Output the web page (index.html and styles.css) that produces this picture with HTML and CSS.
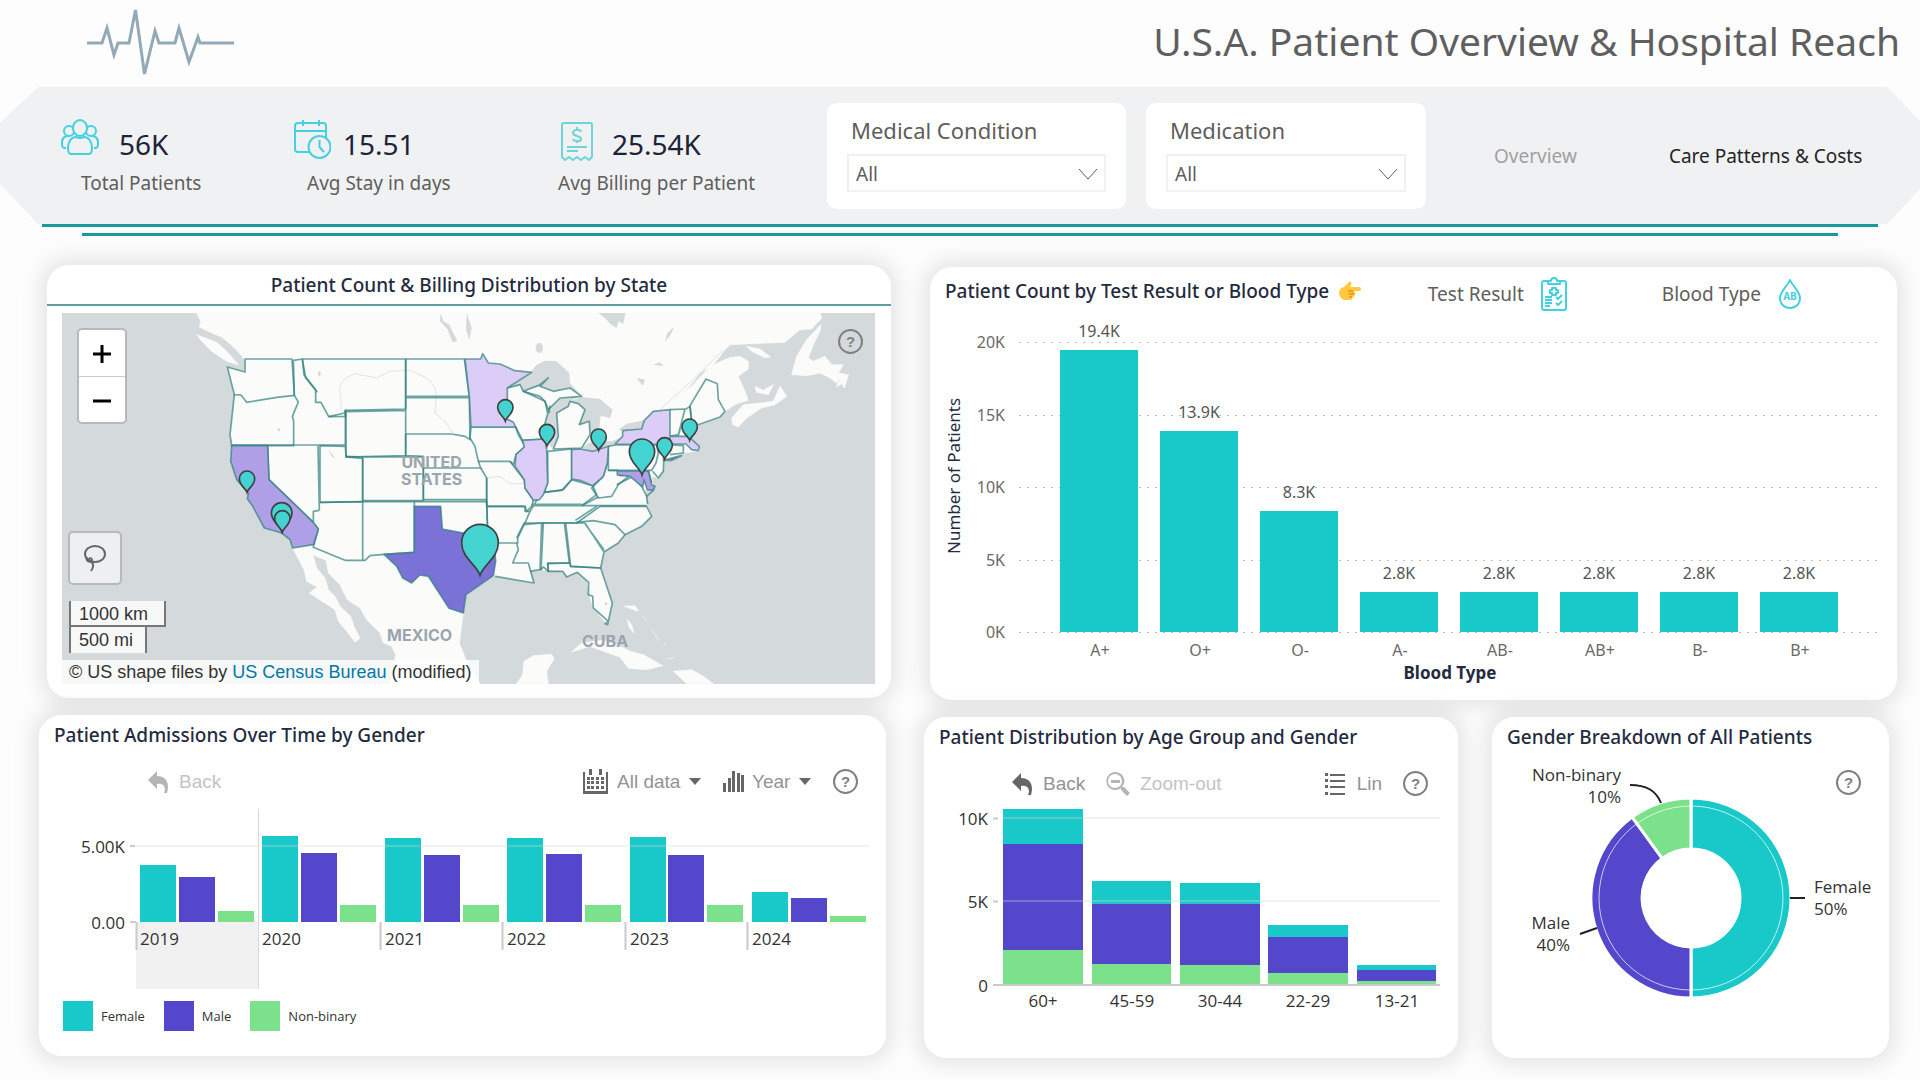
FILE: index.html
```html
<!DOCTYPE html>
<html lang="en">
<head>
  <meta charset="UTF-8" />
  <meta name="viewport" content="width=device-width, initial-scale=1.0" />
  <title>U.S.A. Patient Overview &amp; Hospital Reach</title>
  <link rel="stylesheet" href="styles.css">
</head>
<body>
  <header class="top">
    <svg class="pulse" viewBox="0 0 150 70" width="150" height="70" aria-hidden="true">
      <path d="M1 37H16L21 22L28 49L32 37H43L49.500 4L58.500 68L69 25L73 37H89L93 22L103 56L112 31L114 37H148"/>
    </svg>
    <h1>U.S.A. Patient Overview &amp; Hospital Reach</h1>
  </header>

  <section class="band">
    <div class="kpis">
      <div class="kpi">
        <div class="kpi-row">
          <svg class="icon" viewBox="0 0 46 40" width="46" height="40">
            <circle cx="8" cy="12" r="5"/><circle cx="30" cy="12" r="5"/>
            <path d="M5 29H4C1 29 1 27 1 24C1 20 3 17 7 17M33 29H34C37 29 37 27 37 24C37 20 35 17 31 17"/>
            <ellipse class="fill-bg" cx="19" cy="9" rx="7" ry="8"/>
            <path class="fill-bg" d="M10 35C7 35 7 32 7 29C7 22 11 18 15 18Q19 20 23 18C27 18 31 22 31 29C31 32 31 35 28 35Z"/>
          </svg>
          <span class="kpi-value">56K</span>
        </div>
        <div class="kpi-label indent-lg">Total Patients</div>
      </div>
      <div class="kpi">
        <div class="kpi-row">
          <svg class="icon" viewBox="0 0 37 40" width="37" height="40">
            <rect x="1" y="4" width="31" height="29" rx="3"/>
            <path d="M1 12H32M9 1V7M25 1V7"/>
            <circle class="fill-bg" cx="25.500" cy="28" r="11"/>
            <path d="M25.500 21V28L30 33"/>
          </svg>
          <span class="kpi-value">15.51</span>
        </div>
        <div class="kpi-label indent">Avg Stay in days</div>
      </div>
      <div class="kpi">
        <div class="kpi-row">
          <svg class="icon soft" viewBox="-3 -4 42 44" width="42" height="44">
            <path d="M1 36V4Q1 2 3 2H29Q31 2 31 4V36L28 39L24 36L20 39L16 36L12 39L8 36L4 39Z"/>
            <path d="M20 11C19 8 12 8 12 12C12 16 20 14 20 18C20 21 13 21 12 18M16 6V9M16 19V22M6 26H26M6 30H17"/>
          </svg>
          <span class="kpi-value">25.54K</span>
        </div>
        <div class="kpi-label">Avg Billing per Patient</div>
      </div>
    </div>

    <div class="slicer slicer-wide">
      <label for="condition">Medical Condition</label>
      <div class="select-box">
        <select id="condition"><option>All</option></select>
        <svg viewBox="0 0 20 12" width="20" height="12"><path d="M1 1L10 11L19 1"/></svg>
      </div>
    </div>
    <div class="slicer">
      <label for="medication">Medication</label>
      <div class="select-box">
        <select id="medication"><option>All</option></select>
        <svg viewBox="0 0 20 12" width="20" height="12"><path d="M1 1L10 11L19 1"/></svg>
      </div>
    </div>

    <nav class="pages">
      <a href="#" class="current">Overview</a>
      <a href="#">Care Patterns &amp; Costs</a>
    </nav>
  </section>
  <div class="rule"></div>
  <div class="rule rule-short"></div>

  <main>
    <div class="row row-top">
      <!-- map -->
      <section class="card card-map">
        <h2>Patient Count &amp; Billing Distribution by State</h2>
        <div class="map">
          <svg class="map-svg" viewBox="96 190 2439 1112" role="img" aria-label="Map of the United States">
            <g class="land">
              <path d="M500 190L512 215L508 232L545 250L575 262L610 292L630 312L643 330L645 367L592 352L613 435L600 555L605 588L602 635L620 690L650 725L655 750L668 770L703 835L755 850L780 870L788 895L822 960L830 995L862 1012L838 1030L880 1058L915 1080L925 1115L950 1145L975 1178L990 1165L972 1130L962 1100L930 1070L915 1040L895 1020L885 985L860 955L848 915L888 932L895 970L930 1005L952 1050L990 1075L1010 1110L1050 1150L1060 1180L1085 1190L1097 1215L1080 1302H1350L1310 1235L1288 1180L1300 1090L1308 1035L1390 980L1512 1000L1500 965L1555 960L1600 965L1612 982L1642 968L1672 998L1678 1035L1690 1075L1733 1125L1747 1060L1712 955L1722 907L1765 880L1785 855L1835 830L1865 800L1850 765L1845 720L1870 722L1865 680L1885 685L1902 655L1900 630L1960 610L2008 603L1982 570L1985 535L2070 502L2085 485L2120 462L2155 452L2145 425L2125 380L2155 358L2155 335L2130 320L2095 325L2040 350L1985 410L1890 480L1975 415L2010 370L2050 345L2085 300L2100 285L2265 278L2310 240L2345 238L2375 205L2370 190Z"/>
              <path d="M500 255L560 278L590 305L625 345L590 335L545 305L515 275Z"/>
              <path d="M2372 225L2330 270L2300 320L2285 375L2330 378L2370 370L2400 385L2420 400L2432 375L2420 412L2435 402L2443 415L2456 375L2425 370L2440 345L2405 345L2385 320L2350 335L2335 325L2350 285L2372 240Z"/>
              <path d="M2150 290L2190 298L2222 322L2205 325L2165 305ZM2175 410L2200 422L2230 405L2215 435L2180 428ZM2105 505L2140 465L2190 460L2230 455L2250 410L2270 440L2235 465L2195 475L2150 505L2125 532L2108 525Z"/>
              <path d="M1625 1207L1655 1180L1720 1172L1775 1192L1800 1205L1840 1215L1898 1248L1850 1260L1795 1256L1770 1222L1720 1205L1680 1190Z"/>
              <path d="M1460 1302L1478 1275L1482 1235L1510 1218L1565 1214L1572 1228L1550 1265L1555 1302ZM1930 1265L1985 1260L2020 1280L2050 1302H1970L1938 1272Z"/>
              <path d="M1792 1110L1805 1125L1812 1150L1798 1135ZM1782 1070L1815 1068L1825 1085ZM1840 1100L1850 1115M1865 1140L1885 1170M1900 1190L1908 1182M1912 1228L1932 1225"/>
            </g>
            <g class="lake">
              <path d="M1432 415L1500 370L1520 345L1545 333L1580 335L1618 370L1620 400L1655 440L1620 415L1570 425L1530 410L1480 425L1470 405Z"/>
              <path d="M1555 480L1590 445L1650 440L1620 455L1615 470L1580 490L1585 560L1570 598L1548 580L1545 520Z"/>
              <path d="M1655 442L1710 448L1748 480L1740 505L1712 498L1708 535L1690 555L1680 550L1678 515L1648 525L1665 480L1645 462L1620 455Z"/>
              <path d="M1655 595L1690 572L1745 575L1775 562L1755 583L1735 590L1690 605ZM1765 540L1790 522L1843 512L1835 538L1778 543Z"/>
              <path d="M1705 190H1786L1780 222L1765 215L1760 235L1740 222L1725 205ZM1232 190L1240 215L1258 225L1282 275L1268 278L1252 238L1230 215ZM1310 190L1325 235L1318 270L1308 240Z"/>
              <ellipse cx="1528" cy="295" rx="11" ry="15"/><path d="M1905 278L1912 250L1932 232L1925 250ZM895 600L918 628L905 620ZM1870 345L1890 338L1900 350ZM1820 385L1845 390L1838 408Z"/>
              <ellipse cx="868" cy="372" rx="4" ry="8"/><ellipse cx="746" cy="540" rx="4" ry="5"/><ellipse cx="1728" cy="1062" rx="4" ry="5"/>
            </g>
            <path class="river" d="M933 480C938 430 905 400 975 372L1040 385L1080 365L1140 362L1190 385Q1225 410 1218 455L1215 490L1245 515L1268 550M1370 685L1410 680L1440 702H1480M2080 300L2010 370L1890 480"/>
            <g class="states">
              <path d="M592 352L645 367V328H786L793 437L740 443L650 458L633 436L613 435Z"/>
              <path d="M613 435L600 555L605 588H791V515L787 500L805 457L793 437"/>
              <path d="M790 332L817 328L822 375L857 420V458H873L896 501L944 490L946 482V586H605M790 332L793 437"/>
              <path d="M817 328H1127V478L946 482V500L896 501M817 328L827 385L862 428"/>
              <path d="M1127 478V618L948 622V482M1127 482L950 486"/>
              <path d="M868 588L946 590L948 622L998 626V756L870 758V588M864 588L868 782"/>
              <path d="M713 590L717 690L850 818V785L868 782"/>
              <path d="M870 758L998 756V932H945L850 893L852 885L865 838L850 820"/>
              <path d="M998 756H1153V908L1062 914L1020 918L1005 932H998"/>
              <path d="M998 622H1180V753H998V622L948 620"/>
              <path d="M1127 328H1303L1318 440M1127 328V478M1127 444H1318L1320 570L1305 560L1265 553H1127M1318 440H1130"/>
              <path d="M1127 553V618L1180 620V655H1352L1345 635L1335 590L1320 565"/>
              <path d="M1352 655L1370 685V750H1180V655M1153 756H1370L1373 848"/>
              <path d="M1323 532H1457L1465 555L1485 590L1458 615L1450 645L1440 635H1345M1323 532L1320 565"/>
              <path d="M1432 415L1470 405L1480 425L1530 440L1545 455L1553 490L1560 470L1545 520L1540 568L1478 572L1457 532M1558 480V490"/>
              <path d="M1553 605L1625 598V690L1595 722L1542 728L1553 700Z"/>
              <path d="M1570 598L1585 560L1580 490L1615 470L1620 455L1645 462L1665 480L1648 525L1678 515L1680 555L1655 595ZM1480 425L1530 405L1555 385L1530 410L1570 425L1620 415L1655 440L1590 445L1555 480L1545 455Z"/>
              <path d="M1440 635L1455 655L1483 690L1485 715L1510 750L1505 770L1490 785L1485 770H1370V685"/>
              <path d="M1370 770H1485V785H1500L1485 820L1463 865V880H1395M1370 750L1373 848"/>
              <path d="M1460 880L1465 900L1448 940H1495L1512 1000L1395 980M1460 865L1480 825"/>
              <path d="M1480 825L1535 820L1530 960L1500 965M1540 820L1533 962"/>
              <path d="M1535 820H1603L1618 940H1553L1555 965L1540 952L1530 962"/>
              <path d="M1505 768H1850M1508 764H1655M1500 785L1520 752L1542 728L1600 720L1625 690L1688 708L1700 735L1655 768"/>
              <path d="M1480 820H1640L1710 770M1636 812L1700 770"/>
              <path d="M1735 590V662H1764L1770 678L1805 672L1765 705L1745 740L1705 745L1685 715L1720 680L1732 640"/>
              <path d="M1655 768L1705 742M1760 705L1810 680L1835 710L1850 740L1853 763M1710 770H1850L1865 800L1835 830L1785 855L1755 825L1690 813L1640 818"/>
              <path d="M1603 820L1665 820L1722 907L1712 955L1622 950L1607 820M1665 822L1722 900M1785 855L1765 880L1722 907"/>
              <path d="M1553 942L1618 940L1622 950L1712 955L1747 1060L1733 1125L1725 1122L1735 1115L1690 1075L1688 1040L1675 1035L1676 998L1642 968L1610 982L1598 965L1555 965Z"/>
              <path d="M1735 590L1755 586H1880L1885 610L1878 640L1865 662H1735M1885 605L1902 615L1900 665L1885 685L1868 665M1855 662L1865 700"/>
              <path d="M1920 480L1965 478L1945 555L1920 560M1965 480L1980 470L1985 520M1945 558L1955 520"/>
              <path d="M1980 468L2028 388L2062 402L2065 450L2085 485L2070 502L2005 525L1985 515Z"/>
              <path d="M1920 585L1960 588V610L1920 615M1850 740L1870 722"/>
            </g>
            <g class="states filled">
              <path class="mid" d="M605 588H713L717 690L850 818L865 838L850 885L788 895L780 870L755 850L703 835L668 770L652 747L655 730L620 690L602 635Z"/>
              <path class="dark" d="M1153 770H1232L1237 838L1300 850L1330 845L1375 860L1392 880L1397 935L1390 978L1308 1035L1300 1090L1257 1076L1195 980L1170 976L1145 1000L1118 985L1100 950L1062 914L1153 908Z"/>
              <path class="pale" d="M1305 328H1352L1358 312L1375 340L1410 343L1455 363L1505 368L1432 415V445L1420 475L1425 505L1450 518L1457 532H1323L1318 440Z"/>
              <path class="pale" d="M1478 572L1545 568L1550 600L1553 700L1540 735L1528 750L1510 752L1485 715L1483 690L1455 650L1458 615L1483 592Z"/>
              <path class="pale" d="M1625 600L1650 598L1690 605L1735 590L1732 640L1720 680L1688 708L1650 692L1625 688Z"/>
              <path class="pale" d="M1755 583L1778 560V543L1835 538L1843 512L1870 485L1920 480V585ZM1920 560H1975L2008 590L2005 603L1985 600L1968 583H1920Z"/>
              <path class="mid" d="M1762 664H1855L1865 705L1875 710L1870 722L1852 720L1842 690L1838 712L1800 680L1762 676ZM1900 632L1955 618L1925 632Z"/>
            </g>
            <g class="pins">
              <path transform="translate(651 687)" d="M0 41C-4 28-23 20-23 0A23 23 0 0 1 23 0C23 20 4 28 0 41Z"/>
              <path transform="translate(755 790)" d="M0 55C-5 38-31 25-31 0A31 31 0 0 1 31 0C31 25 5 38 0 55Z"/>
              <path transform="translate(757 806)" d="M0 41C-4 28-23 20-23 0A23 23 0 0 1 23 0C23 20 4 28 0 41Z"/>
              <path transform="translate(1426 473)" d="M0 41C-4 28-23 20-23 0A23 23 0 0 1 23 0C23 20 4 28 0 41Z"/>
              <path transform="translate(1551 547)" d="M0 41C-4 28-23 20-23 0A23 23 0 0 1 23 0C23 20 4 28 0 41Z"/>
              <path transform="translate(1706 561)" d="M0 41C-4 28-23 20-23 0A23 23 0 0 1 23 0C23 20 4 28 0 41Z"/>
              <path transform="translate(1904 587)" d="M0 41C-4 28-23 20-23 0A23 23 0 0 1 23 0C23 20 4 28 0 41Z"/>
              <path transform="translate(1979 531)" d="M0 41C-4 28-23 20-23 0A23 23 0 0 1 23 0C23 20 4 28 0 41Z"/>
              <path transform="translate(1836 606)" d="M0 70C-6 48-38 32-38 0A38 38 0 0 1 38 0C38 32 6 48 0 70Z"/>
              <path transform="translate(1350 879)" d="M0 98C-8 68-55 46-55 0A55 55 0 0 1 55 0C55 46 8 68 0 98Z"/>
            </g>
          </svg>
          <span class="place place-us">UNITED<br>STATES</span>
          <span class="place place-mx">MEXICO</span>
          <span class="place place-cu">CUBA</span>
          <div class="zoom">
            <button type="button" aria-label="Zoom in"><svg viewBox="0 0 20 20" width="20" height="20"><path d="M1 11H19M10 2V20"/></svg></button>
            <button type="button" aria-label="Zoom out"><svg viewBox="0 0 20 20" width="20" height="20"><path d="M1 11H19"/></svg></button>
          </div>
          <button type="button" class="lasso" aria-label="Lasso select">
            <svg viewBox="0 0 26 30" width="26" height="30"><ellipse cx="13" cy="11" rx="10" ry="8"/><path d="M5 14C3 19 10 20 10 17C10 14 5 15 8 18C12 20 12 24 9 28"/></svg>
          </button>
          <div class="scale">
            <div class="scale-km">1000 km</div>
            <div class="scale-mi">500 mi</div>
          </div>
          <div class="credit">© US shape files by <a href="#">US Census Bureau</a> (modified)</div>
          <button type="button" class="help help-map">?</button>
        </div>
      </section>

      <!-- blood type / test result -->
      <section class="card card-blood">
        <div class="card-head">
          <h2>Patient Count by Test Result or Blood Type</h2>
          <svg class="hand" viewBox="0 0 22 20" width="22" height="20">
            <path d="M10 1C12 0 13 2 12 4L11 6H20Q22 6 22 8T20 10H15Q17 11 16 13Q16 16 14 16Q13 19 10 19H5Q0 17 0 11Q1 7 5 6Z" fill="#ffc83d"/>
            <path d="M14 10H9M15 13H10M13 16H10" stroke="#d67d00" fill="none"/>
          </svg>
          <button type="button" class="toggle toggle-test">Test Result
            <svg class="icon" viewBox="0 0 26 34" width="26" height="34">
              <rect x="1" y="4" width="24" height="29" rx="2"/>
              <path class="fill-white" d="M7 7V4H10Q10 1 13 1Q16 1 16 4H19V7Z"/>
              <path d="M11 11H15V13H17V16H15V18H11V16H9V13H11ZM4 20H11M4 23H11M4 26H11M4 29H9M15 20L17 22L21 18M15 26L17 28L21 24"/>
            </svg>
          </button>
          <button type="button" class="toggle">Blood Type
            <svg class="icon" viewBox="0 0 24 32" width="24" height="32">
              <path d="M12 2C10 7 2 14 2 20C2 26 6 30 12 30C18 30 22 26 22 20C22 14 14 7 12 2Z"/>
              <text x="12" y="22" text-anchor="middle">AB</text>
            </svg>
          </button>
        </div>
        <svg class="chart" viewBox="0 0 967 375" role="img" aria-label="Number of patients by blood type">
          <path class="dots" d="M89 27.500H947M89 100.500H947M89 172.500H947M89 245.500H947M89 317.500H947"/>
          <g class="female">
            <rect x="130" y="35" width="78" height="282"/>
            <rect x="230" y="116" width="78" height="201"/>
            <rect x="330" y="196" width="78" height="121"/>
            <rect x="430" y="277" width="78" height="40"/>
            <rect x="530" y="277" width="78" height="40"/>
            <rect x="630" y="277" width="78" height="40"/>
            <rect x="730" y="277" width="78" height="40"/>
            <rect x="830" y="277" width="78" height="40"/>
          </g>
          <g class="axis end">
            <text x="75" y="33">20K</text><text x="75" y="106">15K</text><text x="75" y="178">10K</text><text x="75" y="251">5K</text><text x="75" y="323">0K</text>
          </g>
          <g class="axis mid-text dark-text">
            <text x="169" y="22">19.4K</text><text x="269" y="103">13.9K</text><text x="369" y="183">8.3K</text><text x="469" y="264">2.8K</text>
            <text x="569" y="264">2.8K</text><text x="669" y="264">2.8K</text><text x="769" y="264">2.8K</text><text x="869" y="264">2.8K</text>
          </g>
          <g class="axis mid-text">
            <text x="170" y="341">A+</text><text x="270" y="341">O+</text><text x="370" y="341">O-</text><text x="470" y="341">A-</text>
            <text x="570" y="341">AB-</text><text x="670" y="341">AB+</text><text x="770" y="341">B-</text><text x="870" y="341">B+</text>
          </g>
          <text class="axis-title mid-text" transform="translate(30 161) rotate(-90)">Number of Patients</text>
          <text class="axis-title mid-text strong" x="520" y="364">Blood Type</text>
        </svg>
      </section>
    </div>

    <div class="row row-bottom">
      <!-- admissions -->
      <section class="card card-admissions">
        <h2>Patient Admissions Over Time by Gender</h2>
        <div class="toolbar">
          <button type="button" class="tool" disabled>
            <svg viewBox="0 0 21 22" width="21" height="22"><path d="M0 9L9 0V5C18 5 22 12 19 22H16C19 15 14 12 9 13V18Z"/></svg>Back
          </button>
          <div class="tool push">
            <svg viewBox="0 0 26 25" width="26" height="25"><path d="M0 3H2V22H23V3H25V25H0ZM6 0H9V6H6ZM16 0H19V6H16ZM4 8H7V11H4ZM8 8H11V11H8ZM13 8H16V11H13ZM18 8H21V11H18ZM4 12H7V15H4ZM8 12H11V15H8ZM13 12H16V15H13ZM18 12H21V15H18ZM4 17H7V20H4ZM8 17H11V20H8ZM13 17H16V20H13ZM18 17H21V20H18Z"/></svg>
            <select aria-label="Period"><option>All data</option></select>
            <svg viewBox="0 0 12 7" width="12" height="7"><path d="M0 0H12L6 7Z"/></svg>
          </div>
          <div class="tool tool-year">
            <svg viewBox="0 0 21 21" width="21" height="21"><path d="M0 12H3V21H0ZM5 7H8V21H5ZM9 0H12V21H9ZM14 2H17V21H14ZM18 4H21V21H18Z"/></svg>
            <select aria-label="Unit"><option>Year</option></select>
            <svg viewBox="0 0 12 7" width="12" height="7"><path d="M0 0H12L6 7Z"/></svg>
          </div>
          <button type="button" class="help">?</button>
        </div>
        <svg class="chart" viewBox="0 0 847 190" role="img" aria-label="Admissions per year by gender">
          <rect class="selected" x="97" y="121" width="122" height="67"/>
          <path class="sep" d="M219.500 8V188"/>
          <g class="female">
            <rect x="101" y="64" width="36" height="57"/><rect x="223" y="35" width="36" height="86"/><rect x="346" y="37" width="36" height="84"/>
            <rect x="468" y="37" width="36" height="84"/><rect x="591" y="36" width="36" height="85"/><rect x="713" y="91" width="36" height="30"/>
          </g>
          <g class="male">
            <rect x="140" y="76" width="36" height="45"/><rect x="262" y="52" width="36" height="69"/><rect x="385" y="54" width="36" height="67"/>
            <rect x="507" y="53" width="36" height="68"/><rect x="629" y="54" width="36" height="67"/><rect x="752" y="97" width="36" height="24"/>
          </g>
          <g class="nonbinary">
            <rect x="179" y="110" width="36" height="11"/><rect x="301" y="104" width="36" height="17"/><rect x="424" y="104" width="36" height="17"/>
            <rect x="546" y="104" width="36" height="17"/><rect x="668" y="104" width="36" height="17"/><rect x="791" y="115" width="36" height="6"/>
          </g>
          <path class="grid" d="M97 45H831"/>
          <path class="tick" d="M91 45H96M91 121H97M97.500 121V149M341.500 121V149M463.500 121V149M586.500 121V149M708.500 121V149"/>
          <g class="plain end"><text x="86" y="52">5.00K</text><text x="86" y="128">0.00</text></g>
          <g class="plain">
            <text x="101" y="144">2019</text><text x="223" y="144">2020</text><text x="346" y="144">2021</text>
            <text x="468" y="144">2022</text><text x="591" y="144">2023</text><text x="713" y="144">2024</text>
          </g>
        </svg>
        <ul class="legend">
          <li><span class="swatch swatch-female"></span>Female</li>
          <li><span class="swatch swatch-male"></span>Male</li>
          <li><span class="swatch swatch-nonbinary"></span>Non-binary</li>
        </ul>
      </section>

      <!-- age groups -->
      <section class="card card-age">
        <h2>Patient Distribution by Age Group and Gender</h2>
        <div class="toolbar toolbar-age">
          <button type="button" class="tool">
            <svg viewBox="0 0 21 22" width="21" height="22"><path d="M0 9L9 0V5C18 5 22 12 19 22H16C19 15 14 12 9 13V18Z"/></svg>Back
          </button>
          <button type="button" class="tool" disabled>
            <svg viewBox="0 0 24 24" width="24" height="24"><path fill-rule="evenodd" d="M9 0A9 9 0 0 1 16 15L18 15L24 21L21 24L15 18V16A9 9 0 1 1 9 0ZM9 2A7 7 0 1 0 9 16A7 7 0 1 0 9 2ZM5 8H14V11H5Z"/></svg>Zoom-out
          </button>
          <button type="button" class="tool push">
            <svg viewBox="0 0 20 22" width="20" height="22"><path d="M0 0H3V3H0ZM0 6H3V9H0ZM0 12H3V15H0ZM0 19H3V22H0ZM5 1H20V3H5ZM5 7H20V9H5ZM5 13H20V15H5ZM5 20H20V22H5Z"/></svg>Lin
          </button>
          <button type="button" class="help">?</button>
        </div>
        <svg class="chart" viewBox="0 0 534 225" role="img" aria-label="Patients by age group and gender">
          <g class="female">
            <rect x="79" y="6" width="80" height="36"/><rect x="168" y="78" width="79" height="23"/><rect x="256" y="80" width="80" height="22"/>
            <rect x="344" y="122" width="80" height="12"/><rect x="433" y="162" width="79" height="5"/>
          </g>
          <g class="male">
            <rect x="79" y="41" width="80" height="107"/><rect x="168" y="101" width="79" height="61"/><rect x="256" y="101" width="80" height="62"/>
            <rect x="344" y="134" width="80" height="37"/><rect x="433" y="167" width="79" height="12"/>
          </g>
          <g class="nonbinary">
            <rect x="79" y="147" width="80" height="35"/><rect x="168" y="161" width="79" height="21"/><rect x="256" y="162" width="80" height="20"/>
            <rect x="344" y="170" width="80" height="12"/><rect x="433" y="178" width="79" height="4"/>
          </g>
          <path class="grid" d="M79 15H516M79 98H516"/>
          <path class="tick" d="M69 15.500H74M69 98.500H74M69 182H516"/>
          <g class="plain end"><text x="64" y="22">10K</text><text x="64" y="105">5K</text><text x="64" y="189">0</text></g>
          <g class="plain mid-text">
            <text x="119" y="204">60+</text><text x="208" y="204">45-59</text><text x="296" y="204">30-44</text><text x="384" y="204">22-29</text><text x="473" y="204">13-21</text>
          </g>
        </svg>
      </section>

      <!-- gender -->
      <section class="card card-gender">
        <h2>Gender Breakdown of All Patients</h2>
        <button type="button" class="help help-gender">?</button>
        <svg class="chart" viewBox="0 0 397 290" role="img" aria-label="Female 50%, Male 40%, Non-binary 10%">
          <g class="slices">
            <path class="female" d="M199 49A100 100 0 0 1 199 249V198A49 49 0 0 0 199 100Z"/>
            <path class="male" d="M199 249A100 100 0 0 1 140.200 68.100L170.200 109.400A49 49 0 0 0 199 198Z"/>
            <path class="nonbinary" d="M140.200 68.100A100 100 0 0 1 199 49V100A49 49 0 0 0 170.200 109.400Z"/>
          </g>
          <circle class="ring" cx="199" cy="149" r="92"/>
          <path class="leader" d="M298 149H313M105 179L88 185M169 54C164 41 154 36 138 36"/>
          <g class="plain end">
            <text x="129" y="32">Non-binary</text><text x="129" y="54">10%</text>
            <text x="78" y="180">Male</text><text x="78" y="202">40%</text>
          </g>
          <g class="plain"><text x="322" y="144">Female</text><text x="322" y="166">50%</text></g>
        </svg>
      </section>
    </div>
  </main>
</body>
</html>
```
FILE: styles.css
```css
* {
  box-sizing: border-box;
}
body {
  margin: 0;
  background: #fdfdfd;
  font-family: 'Trebuchet MS', 'Noto Sans', sans-serif;
  color: #605e5c;
}
h1, h2 {
  margin: 0;
  font-weight: 400;
}
button, select {
  font-family: inherit;
  color: inherit;
  background: none;
  border: none;
  padding: 0;
}
svg {
  display: block;
  flex: none;
}

/* header */
.top {
  display: flex;
  align-items: center;
  justify-content: space-between;
  height: 87px;
  padding: 0 20px 6px 86px;
}
.top h1 {
  font-size: 39px;
  line-height: 48px;
  color: #5f5f5f;
}
.pulse path {
  fill: none;
  stroke: #93a9b8;
  stroke-width: 3;
}
.band {
  display: flex;
  align-items: center;
  height: 137px;
  padding-left: 61px;
  background: #f0f1f3;
  clip-path: polygon(38px 0, calc(100% - 33px) 0, 100% 34px, 100% 102px, calc(100% - 33px) 100%, 38px 100%, 0 97px, 0 36px);
}
.rule {
  height: 3px;
  margin: 0 42px;
  background: #1c9999;
}
.rule-short {
  margin: 6px 82px 0;
}

/* kpis */
.kpis {
  display: grid;
  grid-template-columns: 233px 264px 1fr;
  flex: 0 0 766px;
}
.kpi-row {
  display: flex;
  align-items: center;
  gap: 12px;
  height: 44px;
}
.kpi-value {
  font-size: 28px;
  line-height: 32px;
  padding-top: 10px;
  color: #1d2438;
}
.kpi-label {
  font-size: 19px;
  line-height: 24px;
  padding-top: 10px;
  white-space: nowrap;
}
.indent {
  padding-left: 13px;
}
.indent-lg {
  padding-left: 20px;
}
.icon {
  fill: none;
  stroke: #45d0e0;
  stroke-width: 2;
  stroke-linejoin: round;
}
.icon.soft {
  stroke: #6fd3d8;
}
.icon .fill-bg {
  fill: #f0f1f3;
}
.icon .fill-white {
  fill: #fff;
}
.icon text {
  fill: #45d0e0;
  stroke: none;
  font-size: 10px;
  font-weight: 700;
}

/* slicers */
.slicer {
  flex: 0 0 280px;
  height: 106px;
  padding: 13px 20px;
  margin-right: 20px;
  background: #fff;
  border-radius: 10px;
}
.slicer-wide {
  flex-basis: 299px;
}
.slicer label {
  display: block;
  font-size: 22px;
  line-height: 28px;
  padding-left: 4px;
}
.select-box {
  position: relative;
  margin-top: 10px;
}
.select-box select {
  width: 100%;
  height: 38px;
  padding: 3px 0 0 7px;
  border: 2px solid #f1f1f1;
  font-size: 19px;
  appearance: none;
}
.select-box svg {
  position: absolute;
  right: 8px;
  top: 14px;
  fill: none;
  stroke: #605e5c;
  pointer-events: none;
}
.pages {
  display: flex;
  gap: 92px;
  padding-left: 48px;
  font-size: 19px;
  line-height: 24px;
  white-space: nowrap;
}
.pages a {
  color: #252423;
  text-decoration: none;
}
.pages .current {
  color: #a0a0a0;
}

/* cards */
.row {
  display: flex;
}
.row-top {
  gap: 39px;
  padding: 29px 23px 0 47px;
}
.row-bottom {
  padding: 17px 31px 23px 39px;
}
.card {
  position: relative;
  min-width: 0;
  background: #fff;
  border-radius: 22px;
  padding-top: 8px;
  box-shadow: 0 0 20px 8px rgba(0, 0, 0, 0.09);
}
.card h2 {
  font-size: 19px;
  line-height: 24px;
  font-weight: 500;
  color: #252b3f;
  white-space: nowrap;
}
.card-map {
  flex: 844;
}
.card-blood {
  flex: 967;
  margin: 2px 0 -2px;
}
.card-admissions {
  flex: 847;
  margin-right: 38px;
}
.card-age {
  flex: 534;
  margin: 2px 34px -2px 0;
}
.card-gender {
  flex: 397;
  margin: 2px 0 -2px;
}
.row-bottom h2 {
  padding-left: 15px;
}
.chart {
  width: 100%;
  height: auto;
}

/* map */
.card-map h2 {
  padding-bottom: 7px;
  border-bottom: 2px solid #5f9f9f;
  text-align: center;
  box-sizing: content-box;
}
.map {
  position: relative;
  margin: 7px 16px 14px 15px;
  overflow: hidden;
  font-family: 'Liberation Sans', Arial, sans-serif;
}
.map-svg {
  width: 100%;
  height: auto;
  background: #d4d9dc;
}
.land {
  fill: #fbfbf9;
  stroke: #fbfbf9;
  stroke-width: 2;
}
.lake {
  fill: #d4d9dc;
}
.river {
  fill: none;
  stroke: #dfe3e5;
  stroke-width: 3;
}
.states {
  fill: none;
  stroke: #2f7f7d;
  stroke-opacity: 0.7;
  stroke-width: 5;
  stroke-linejoin: round;
}
.states .pale {
  fill: #dccdf8;
}
.states .mid {
  fill: #ae9fe6;
}
.states .dark {
  fill: #7b72d8;
}
.pins {
  fill: #45d3d1;
  stroke: #404040;
  stroke-width: 5;
}
.place {
  position: absolute;
  font-family: Inter, 'Noto Sans', sans-serif;
  font-size: 16px;
  line-height: 17px;
  font-weight: 700;
  color: #9aa5af;
  text-align: center;
}
.place-us {
  left: 339px;
  top: 141px;
}
.place-mx {
  left: 325px;
  top: 314px;
}
.place-cu {
  left: 520px;
  top: 320px;
}
.zoom {
  position: absolute;
  left: 15px;
  top: 15px;
  width: 50px;
  border: 2px solid #b5b9bc;
  border-radius: 5px;
  background: #fff;
}
.zoom button {
  display: flex;
  align-items: center;
  justify-content: center;
  width: 100%;
  height: 46px;
}
.zoom button + button {
  border-top: 1px solid #ccc;
}
.zoom path {
  stroke: #000;
  stroke-width: 3;
}
.lasso {
  position: absolute;
  left: 6px;
  top: 218px;
  width: 54px;
  height: 54px;
  display: flex;
  align-items: center;
  justify-content: center;
  background: #eeeff1;
  border: 2px solid #b5b9bc;
  border-radius: 5px;
}
.lasso svg {
  fill: none;
  stroke: #666;
  stroke-width: 2;
}
.scale {
  position: absolute;
  left: 7px;
  top: 288px;
  font-size: 18px;
  line-height: 26px;
  color: #333;
}
.scale div {
  height: 26px;
  padding-left: 8px;
  border: 2px solid #777;
  border-top: none;
  background: rgba(255, 255, 255, 0.8);
}
.scale-km {
  width: 97px;
}
.scale .scale-mi {
  width: 78px;
  border-bottom: none;
}
.credit {
  position: absolute;
  left: 0;
  bottom: 0;
  padding: 0 8px 0 7px;
  font-size: 18px;
  line-height: 24px;
  color: #333;
  background: rgba(255, 255, 255, 0.8);
}
.credit a {
  color: #0078a8;
  text-decoration: none;
}
.help {
  flex: none;
  width: 25px;
  height: 25px;
  border: 2px solid #808080;
  border-radius: 50%;
  font: 700 15px/21px 'Liberation Sans', Arial, sans-serif;
  color: #808080;
}
.help-map {
  position: absolute;
  right: 12px;
  top: 16px;
}
.help-gender {
  position: absolute;
  right: 28px;
  top: 53px;
}

/* blood type card */
.card-head {
  display: flex;
  align-items: center;
  height: 40px;
  padding-left: 15px;
}
.card-head h2 {
  padding-bottom: 8px;
}
.hand {
  margin: 0 0 8px 10px;
}
.toggle {
  display: flex;
  align-items: center;
  gap: 17px;
  margin: 0 95px 2px 0;
  font-size: 19px;
  line-height: 24px;
}
.toggle-test {
  margin-left: auto;
}
.female {
  fill: #19c9ca;
}
.male {
  fill: #5447cc;
}
.nonbinary {
  fill: #7be28b;
}
.dots {
  stroke: #b5bccb;
  stroke-width: 1;
  stroke-dasharray: 2 6;
}
.axis {
  font-size: 16px;
  fill: #6b6967;
}
.dark-text {
  fill: #555;
}
.end {
  text-anchor: end;
}
.mid-text {
  text-anchor: middle;
}
.axis-title {
  font-size: 17px;
  fill: #252b3f;
}
.strong {
  font-weight: 700;
}

/* toolbars */
.toolbar {
  display: flex;
  align-items: center;
  height: 28px;
  margin: 21px 0 5px;
  padding: 0 28px 0 109px;
  font-family: 'Liberation Sans', Arial, sans-serif;
}
.toolbar-age {
  padding: 0 30px 0 88px;
  gap: 21px;
}
.tool {
  display: flex;
  align-items: center;
  gap: 10px;
  font-size: 19px;
  color: #939393;
}
.tool select {
  font-size: 19px;
  appearance: none;
}
.tool svg {
  fill: #666;
}
.tool:disabled {
  color: #c4c4c4;
}
.tool:disabled svg {
  fill: #b5b5b5;
}
.push {
  margin-left: auto;
}
.tool-year {
  margin: 0 22px;
}
.push, .tool-year {
  gap: 8px;
}
.toolbar-age .push {
  gap: 12px;
}

/* drill charts */
.plain {
  font-family: 'Segoe UI', 'Open Sans', sans-serif;
  font-size: 17px;
  fill: #333;
}
.selected {
  fill: #f1f1f1;
}
.sep {
  stroke: #d8d8d8;
}
.grid {
  stroke: #d8d8d8;
  stroke-opacity: 0.3;
  stroke-width: 2;
}
.tick {
  stroke: #cacaca;
  stroke-width: 2;
}
.legend {
  display: flex;
  gap: 19px;
  margin: 0;
  padding: 10px 0 25px 24px;
  list-style: none;
  font-family: 'Segoe UI', 'Open Sans', sans-serif;
  font-size: 13px;
  line-height: 18px;
  color: #333;
}
.legend li {
  display: flex;
  align-items: center;
  gap: 8px;
}
.swatch {
  width: 30px;
  height: 30px;
}
.swatch-female {
  background: #19c9ca;
}
.swatch-male {
  background: #5447cc;
}
.swatch-nonbinary {
  background: #7be28b;
}
.slices {
  stroke: #fff;
  stroke-width: 3;
}
.ring {
  fill: none;
  stroke: #fff;
  stroke-opacity: 0.7;
  stroke-width: 1;
}
.leader {
  fill: none;
  stroke: #222;
  stroke-width: 2;
}
```
